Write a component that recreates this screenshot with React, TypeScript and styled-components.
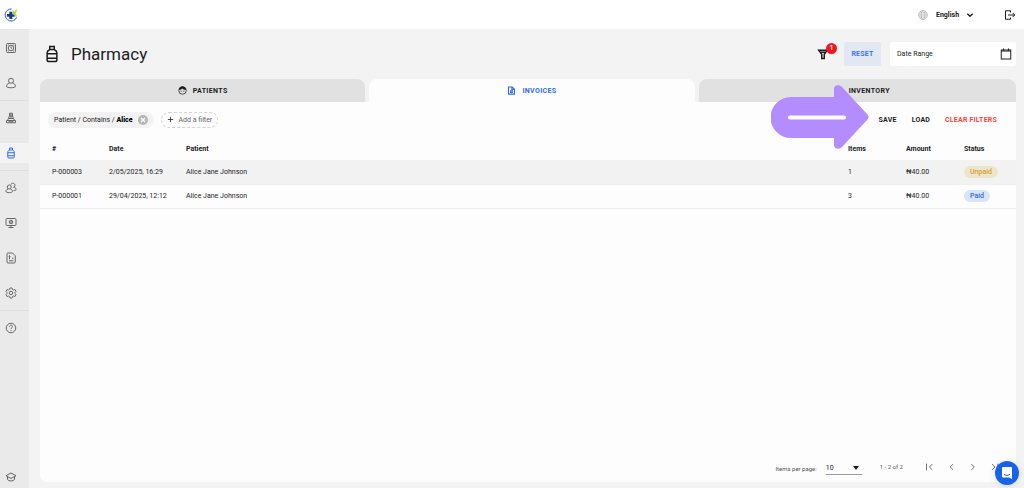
import React from "react";
import styled, { createGlobalStyle, css } from "styled-components";

const Global = createGlobalStyle`
  *, *::before, *::after { box-sizing: border-box; }
  body { margin: 0; background: #f3f3f3; color: #1c1c1e; font: 500 7px/10px Roboto, "Open Sans", sans-serif; }
  button, input, select { font: inherit; color: inherit; border: 0; background: none; margin: 0; padding: 0; outline: none; }
  button, select { cursor: pointer; }
  a { color: inherit; text-decoration: none; }
`;

const Page = styled.div`
  min-height: 100vh;
  display: flex;
  flex-direction: column;
`;

const Header = styled.header`
  display: flex;
  align-items: center;
  height: 29px;
  padding: 0 8px 0 4px;
  background: #fff;
`;

const HomeLink = styled.a`
  display: flex;
  margin-right: auto;
`;

const Language = styled.label`
  display: flex;
  align-items: center;
  gap: 8px;
  color: #b5b5b5;
  margin-right: 30px;
`;

const SelectWrap = styled.span`
  display: flex;
  align-items: center;
  color: #1c1c1e;
  font-weight: 700;
  svg { margin-left: -10px; pointer-events: none; }
`;

const LanguageSelect = styled.select`
  appearance: none;
  width: 40px;
  height: 14px;
`;

const IconButton = styled.button`
  display: flex;
  align-items: center;
  justify-content: center;
`;

const Body = styled.div`
  flex: 1;
  display: flex;
`;

const Sidebar = styled.nav`
  width: 29px;
  flex: none;
  display: flex;
  flex-direction: column;
  padding-top: 1px;
  background: #eaeaea;
  color: #666;
`;

const NavItem = styled.div<{ $divided?: boolean; $last?: boolean }>`
  height: 35px;
  display: flex;
  align-items: center;
  border-top: 1px solid ${(p) => (p.$divided ? "#dfdfdf" : "transparent")};
  ${(p) => p.$last && css`
    height: 23px;
    margin-top: auto;
  `}
`;

const NavLink = styled.a<{ $active?: boolean }>`
  flex: 1;
  height: 20px;
  display: flex;
  align-items: center;
  padding-left: 5px;
  color: ${(p) => (p.$active ? "#2f6bea" : "inherit")};
  background: ${(p) => (p.$active ? "#f3f3f3" : "transparent")};
`;

const Main = styled.main`
  flex: 1;
  min-width: 0;
  display: flex;
  flex-direction: column;
  padding: 13px 8px 6px 11px;
`;

const TitleBar = styled.div`
  display: flex;
  align-items: center;
  height: 24px;
  margin-bottom: 13px;
  padding-left: 3px;
`;

const Title = styled.h1`
  margin: 0 auto 0 10px;
  font-size: 17px;
  line-height: 24px;
  font-weight: 400;
`;

const FilterButton = styled(IconButton)`
  position: relative;
  margin-right: 15px;
`;

const Badge = styled.span`
  position: absolute;
  left: 9px;
  top: -5px;
  width: 11px;
  height: 11px;
  border-radius: 50%;
  background: #ee1622;
  color: #fff;
  line-height: 11px;
  text-align: center;
`;

const ResetButton = styled.button`
  width: 37px;
  height: 24px;
  margin-right: 9px;
  border-radius: 2px;
  background: #e1e8f4;
  color: #3b74ec;
  font-weight: 700;
  letter-spacing: 0.03em;
`;

const DateField = styled.label`
  display: flex;
  align-items: center;
  width: 126px;
  height: 24px;
  padding: 0 4px 0 7px;
  border-radius: 2px;
  background: #fff;
`;

const DateInput = styled.input`
  flex: 1;
  min-width: 0;
  font-weight: 400;
  &::placeholder { color: #1c1c1e; opacity: 1; }
`;

const Tabs = styled.div`
  display: grid;
  grid-template-columns: 41fr 41fr 40fr;
  gap: 4px;
`;

const Tab = styled.button<{ $active?: boolean }>`
  display: flex;
  align-items: center;
  justify-content: center;
  gap: 6px;
  height: 23px;
  border-radius: 8px 8px 0 0;
  letter-spacing: 0.05em;
  font-weight: 700;
  color: ${(p) => (p.$active ? "#2f6bea" : "#1c1c1e")};
  background: ${(p) => (p.$active ? "#fdfdfd" : "#e1e1e1")};
  &:last-child { padding-left: 9px; }
`;

const Panel = styled.section`
  flex: 1;
  display: flex;
  flex-direction: column;
  background: #fdfdfd;
  border-radius: 0 0 7px 7px;
`;

const FilterBar = styled.div`
  display: flex;
  align-items: center;
  height: 35px;
  padding: 0 19px 0 8px;
`;

const Chip = styled.div`
  display: flex;
  align-items: center;
  gap: 5px;
  height: 16px;
  padding: 0 6px;
  margin-right: 7px;
  border-radius: 8px;
  background: #f2f2f2;
  white-space: pre;
  font-weight: 400;
  b { font-weight: 900; color: #000; }
`;

const AddFilter = styled.button`
  display: flex;
  align-items: center;
  gap: 5px;
  height: 16px;
  padding: 0 5px;
  margin-right: auto;
  border: 1px dashed #d3d3d3;
  border-radius: 8px;
  color: #666;
  font-weight: 400;
  svg { color: #333; }
`;

const Actions = styled.div`
  display: flex;
  gap: 15px;
`;

const Action = styled.button<{ $danger?: boolean }>`
  color: ${(p) => (p.$danger ? "#f4433c" : "#1c1c1e")};
  font-weight: 700;
  letter-spacing: 0.03em;
`;

const Table = styled.table`
  width: 100%;
  table-layout: fixed;
  border-collapse: collapse;
  text-align: left;
`;

const Col = styled.col<{ $w?: number }>`
  ${(p) => p.$w && `width: ${p.$w}px;`}
`;

const HeadRow = styled.tr`
  height: 23px;
`;

const Row = styled.tr<{ $shaded?: boolean }>`
  height: 24px;
  border-bottom: 1px solid #f0f0f0;
  background: ${(p) => (p.$shaded ? "#f2f2f2" : "transparent")};
`;

const Th = styled.th`
  padding: 0;
  font-weight: 700;
  &:first-child { padding-left: 12px; }
`;

const Td = styled.td`
  padding: 0;
  font-weight: 400;
  &:first-child { padding-left: 12px; }
`;

const Status = styled.span<{ $paid?: boolean }>`
  display: inline-block;
  padding: 1px 6px;
  border-radius: 6px;
  font-weight: 500;
  color: ${(p) => (p.$paid ? "#3069ea" : "#d4a234")};
  background: ${(p) => (p.$paid ? "#d9e4fb" : "#efe5cc")};
`;

const Pagination = styled.div`
  display: flex;
  align-items: center;
  justify-content: flex-end;
  margin-top: auto;
  height: 30px;
  padding-right: 16px;
  color: #555;
  font-size: 6px;
  font-weight: 400;
`;

const PageSize = styled.label`
  display: flex;
  align-items: center;
  gap: 9px;
  margin-right: 18px;
  padding-top: 3px;
`;

const SizeSelect = styled.span`
  display: flex;
  align-items: center;
  width: 36px;
  border-bottom: 1px solid #999;
  color: #1c1c1e;
  font-size: 7px;
  select { appearance: none; flex: 1; height: 11px; }
  svg { margin: 0 3px 0 -10px; pointer-events: none; }
`;

const Pager = styled.div`
  display: flex;
  gap: 12px;
  margin-left: 21px;
`;

const Pointer = styled.svg`
  position: absolute;
  right: 155px;
  top: 84px;
  width: 98px;
  height: 66px;
  pointer-events: none;
`;

const ChatButton = styled.button`
  position: fixed;
  right: 5px;
  bottom: 3px;
  width: 24px;
  height: 24px;
  display: flex;
  align-items: center;
  justify-content: center;
  border-radius: 50%;
  background: #1663ea;
  box-shadow: 0 1px 8px rgba(0, 0, 0, 0.12);
`;

const glyphs = {
  dashboard: (
    <>
      <rect x="3" y="3" width="18" height="18" rx="2" />
      <circle cx="12" cy="12" r="5.500" />
      <path d="M12 9v3l2 1M5.500 6h2M16.500 6h2M5.500 18h2M16.500 18h2" />
    </>
  ),
  patient: (
    <>
      <circle cx="12" cy="7.500" r="5" />
      <path d="M9 12c-4 1-6 4-6 6.500 0 4 18 4 18 0 0-2.500-2-5.500-6-6.500" />
    </>
  ),
  lab: (
    <path d="M3 21.500h18V17H3zM5 17l4-9V2.500h6V8l4 9M9 8h6M8 13h8M12 3v10M7 19.500h10" />
  ),
  bottle: (
    <path d="M9 2h6v4H9zM9 6C6 7.500 5.500 8.500 5.500 10.500v9c0 2 .5 2.500 2.500 2.500h8c2 0 2.500-.5 2.500-2.500v-9c0-2-.5-3-3.500-4.500M5.500 11.500h13M5.500 17.500h13" />
  ),
  people: (
    <>
      <circle cx="8.500" cy="10" r="4" />
      <path d="M6 14c-3 1-4 3-4 5 0 3 13 3 13 0 0-2-1-4-4-5M12 5c1-4 8-3 8 1.500 0 3-2 4-4 4M18 10c3 1 4 3 4 5s-2 2-5 2" />
    </>
  ),
  monitor: (
    <>
      <rect x="2" y="3" width="20" height="14" rx="2" />
      <circle cx="12" cy="10" r="3.500" />
      <path d="M12 8v4M12 17v4M7 21h10" />
    </>
  ),
  report: (
    <path d="M4 4q0-2 2-2h9l5.500 5.500V20q0 2-2 2H6q-2 0-2-2zM9 6.500v8M7.500 9H11M14 12.500h3M8 17.500h9" />
  ),
  settings: (
    <>
      <path d="M10 2h4l1 3 2 1 3-1 2 4-2 2v2l2 2-2 4-3-1-2 1-1 3h-4l-1-3-2-1-3 1-2-4 2-2v-2L2 9l2-4 3 1 2-1z" />
      <circle cx="12" cy="12" r="3.500" />
    </>
  ),
  help: (
    <>
      <circle cx="12" cy="12" r="9.500" />
      <path d="M9 9.500c0-4 6-4 6 0 0 2-3 2-3 4.500M12 16v2" />
    </>
  ),
  education: (
    <path d="M12 4L2 9.500l10 5.500 10-5.500zM5 12v5c3 4 11 4 14 0v-5" />
  ),
  globe: (
    <>
      <circle cx="12" cy="12" r="10.500" />
      <ellipse cx="12" cy="12" rx="4.500" ry="10.500" />
      <path d="M2 12h20M3.500 7h17M3.500 17h17" />
    </>
  ),
  chevronDown: <path d="M4 8l8 8 8-8" />,
  logout: <path d="M13 7V3.500H3v17h10V17M8 12h13M17.500 8l4 4-4 4" />,
  filter: <path d="M3.500 4.500h17l-6 8V21h-5v-8.500zM8 8.500h8" />,
  calendar: (
    <>
      <rect x="2.500" y="4" width="19" height="18" />
      <path d="M2.500 6h19M7 1v4M17 1v4" />
    </>
  ),
  face: (
    <>
      <circle cx="12" cy="12" r="10" />
      <path d="M3 9c4 0 7-1 8-4 2 3 6 4 10 4-2-5-5-7-9-7s-7 2-9 7z" fill="currentColor" />
      <path d="M8.500 12.500v3M15.500 12.500v3" />
    </>
  ),
  document: <path d="M4 2.500h10l6 6v13H4zM13 3v6h6M8 13h8M8 17h8" />,
  plus: <path d="M12 3v18M3 12h18" />,
  first: <path d="M6 4v16M20 5l-7 7 7 7" />,
  previous: <path d="M17 5l-7 7 7 7" />,
  next: <path d="M8 5l7 7-7 7" />,
  last: <path d="M19 4v16M5 5l7 7-7 7" />,
};

type IconName = keyof typeof glyphs;

const Icon = ({ name, size = 12, weight = 2 }: { name: IconName; size?: number; weight?: number }) => (
  <svg width={size} height={size} viewBox="0 0 24 24" fill="none" stroke="currentColor" strokeWidth={weight} aria-hidden="true">
    {glyphs[name]}
  </svg>
);

const Logo = () => (
  <svg width="14" height="14" viewBox="0 0 42 42" aria-hidden="true">
    <path d="M23 3A18 18 0 1 0 38 28" fill="none" stroke="#2867a9" strokeWidth="3" />
    <path d="M8 33q13 12 27 0" fill="none" stroke="#74ad93" strokeWidth="3" />
    <path d="M16 11h9v7h7v8h-7v7h-9v-7H9v-8h7z" fill="#10389f" />
    <path d="M26 7l5 5 8-9-2 9-3 6 4 4-2 5-5-7-5-1z" fill="#b4d330" stroke="#b4d330" strokeWidth="1" />
  </svg>
);

const navItems: { icon: IconName; label: string; divided?: boolean; active?: boolean }[] = [
  { icon: "dashboard", label: "Dashboard" },
  { icon: "patient", label: "Patients" },
  { icon: "lab", label: "Laboratory", divided: true },
  { icon: "bottle", label: "Pharmacy", active: true },
  { icon: "people", label: "Users", divided: true },
  { icon: "monitor", label: "Billing" },
  { icon: "report", label: "Reports" },
  { icon: "settings", label: "Settings" },
  { icon: "help", label: "Help", divided: true },
];

const invoices = [
  { id: "P-000003", date: "2/05/2025, 16:29", patient: "Alice Jane Johnson", items: 1, amount: "₦40.00", paid: false },
  { id: "P-000001", date: "29/04/2025, 12:12", patient: "Alice Jane Johnson", items: 3, amount: "₦40.00", paid: true },
];

export default function App() {
  return (
    <Page>
      <Global />
      <Header>
        <HomeLink href="#" aria-label="Home"><Logo /></HomeLink>
        <Language>
          <Icon name="globe" size={10} />
          <SelectWrap>
            <LanguageSelect aria-label="Language"><option>English</option></LanguageSelect>
            <Icon name="chevronDown" size={8} weight={4} />
          </SelectWrap>
        </Language>
        <IconButton aria-label="Log out"><Icon name="logout" /></IconButton>
      </Header>
      <Body>
        <Sidebar aria-label="Main">
          {navItems.map((n) => (
            <NavItem key={n.icon} $divided={n.divided}>
              <NavLink href="#" aria-label={n.label} $active={n.active}><Icon name={n.icon} /></NavLink>
            </NavItem>
          ))}
          <NavItem $last>
            <NavLink href="#" aria-label="Learning"><Icon name="education" /></NavLink>
          </NavItem>
        </Sidebar>
        <Main>
          <TitleBar>
            <Icon name="bottle" size={18} />
            <Title>Pharmacy</Title>
            <FilterButton aria-label="Filters, 1 active">
              <Icon name="filter" weight={3} />
              <Badge>1</Badge>
            </FilterButton>
            <ResetButton>RESET</ResetButton>
            <DateField>
              <DateInput aria-label="Date range" placeholder="Date Range" />
              <IconButton aria-label="Open calendar"><Icon name="calendar" /></IconButton>
            </DateField>
          </TitleBar>
          <Tabs role="tablist">
            <Tab role="tab"><Icon name="face" size={9} />PATIENTS</Tab>
            <Tab role="tab" $active aria-selected><Icon name="document" size={9} weight={3} />INVOICES</Tab>
            <Tab role="tab"><Icon name="report" size={9} weight={3} />INVENTORY</Tab>
          </Tabs>
          <Panel>
            <FilterBar>
              <Chip>
                <span>Patient / Contains / <b>Alice</b></span>
                <IconButton aria-label="Remove filter">
                  <svg width="10" height="10" viewBox="0 0 20 20" aria-hidden="true">
                    <circle cx="10" cy="10" r="10" fill="#b5b5b5" />
                    <path d="M6 6l8 8M14 6l-8 8" stroke="#fff" strokeWidth="2.500" />
                  </svg>
                </IconButton>
              </Chip>
              <AddFilter><Icon name="plus" size={7} weight={3} />Add a filter</AddFilter>
              <Actions>
                <Action>SAVE</Action>
                <Action>LOAD</Action>
                <Action $danger>CLEAR FILTERS</Action>
              </Actions>
            </FilterBar>
            <Table>
              <colgroup>
                <Col $w={69} /><Col $w={77} /><Col /><Col $w={58} /><Col $w={58} /><Col $w={52} />
              </colgroup>
              <thead>
                <HeadRow>
                  {["#", "Date", "Patient", "Items", "Amount", "Status"].map((h) => <Th key={h}>{h}</Th>)}
                </HeadRow>
              </thead>
              <tbody>
                {invoices.map((r, i) => (
                  <Row key={r.id} $shaded={i % 2 === 0}>
                    <Td>{r.id}</Td>
                    <Td>{r.date}</Td>
                    <Td>{r.patient}</Td>
                    <Td>{r.items}</Td>
                    <Td>{r.amount}</Td>
                    <Td><Status $paid={r.paid}>{r.paid ? "Paid" : "Unpaid"}</Status></Td>
                  </Row>
                ))}
              </tbody>
            </Table>
            <Pagination>
              <PageSize>
                Items per page:
                <SizeSelect>
                  <select aria-label="Items per page"><option>10</option></select>
                  <svg width="6" height="4" viewBox="0 0 6 4" aria-hidden="true"><path d="M0 0h6L3 4z" fill="currentColor" /></svg>
                </SizeSelect>
              </PageSize>
              <span>1 - 2 of 2</span>
              <Pager>
                <IconButton aria-label="First page"><Icon name="first" size={10} /></IconButton>
                <IconButton aria-label="Previous page"><Icon name="previous" size={10} /></IconButton>
                <IconButton aria-label="Next page"><Icon name="next" size={10} /></IconButton>
                <IconButton aria-label="Last page"><Icon name="last" size={10} /></IconButton>
              </Pager>
            </Pagination>
          </Panel>
        </Main>
      </Body>
      <Pointer viewBox="0 0 98 66" aria-hidden="true">
        <path d="M20 13h43V5c0-4 5-5 8-2l25 27c2 2 2 4 0 6L71 63c-3 3-8 2-8-2v-7H20a20.500 20.500 0 0 1 0-41z" fill="#b38cff" />
        <path d="M19 33.500h54" stroke="#fff" strokeWidth="4" strokeLinecap="round" />
      </Pointer>
      <ChatButton aria-label="Open chat">
        <svg width="12" height="14" viewBox="0 0 12 14" aria-hidden="true">
          <path d="M2 1h8q1 0 1 1v11l-3-1.500H2q-1 0-1-1V2q0-1 1-1z" fill="#fff" />
          <path d="M3 8.500q3 2 6 0" fill="none" stroke="#1663ea" />
        </svg>
      </ChatButton>
    </Page>
  );
}
